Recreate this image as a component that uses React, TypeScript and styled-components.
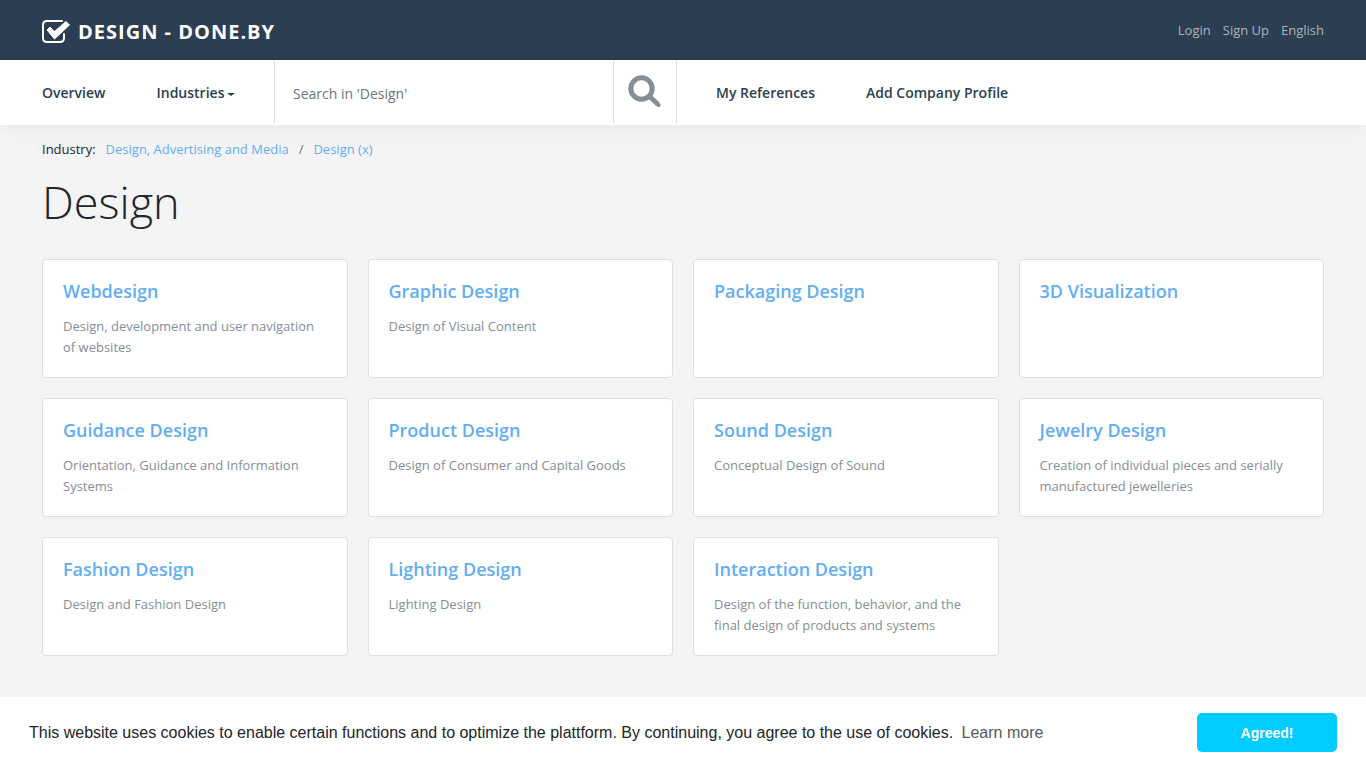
import React from "react";
import styled, { createGlobalStyle } from "styled-components";

const GlobalStyle = createGlobalStyle`
  *, *::before, *::after { box-sizing: border-box; }
  body {
    margin: 0;
    background: #f4f4f4;
    color: #212529;
    font-family: "Open Sans", "Noto Sans", sans-serif;
    font-size: 14px;
    line-height: 21px;
  }
  a { text-decoration: none; }
`;

const TopBar = styled.header`
  display: flex;
  align-items: center;
  justify-content: space-between;
  height: 60px;
  padding: 0 42px;
  background: #2c3e52;
`;

const Brand = styled.a`
  display: flex;
  align-items: center;
  gap: 8px;
  padding-top: 3px;
  color: #fff;
  font-size: 20px;
  line-height: 30px;
  font-weight: 700;
  letter-spacing: 1px;
  text-transform: uppercase;
`;

const AccountLinks = styled.nav`
  display: flex;
  gap: 12px;
`;

const AccountLink = styled.a`
  color: #abb2ba;
  font-size: 13px;
`;

const NavBar = styled.nav`
  display: flex;
  height: 65px;
  padding-left: 42px;
  background: #fff;
  border-bottom: 1px solid #fff;
  box-shadow: 0 2px 20px rgba(0, 0, 0, 0.06);
`;

const NavGroup = styled.div<{ $width?: number }>`
  display: flex;
  align-items: center;
  gap: 51px;
  flex: 0 0 ${(p) => (p.$width ? `${p.$width}px` : "auto")};
`;

const NavLink = styled.a`
  display: flex;
  align-items: center;
  gap: 3px;
  color: #2c3e50;
  font-size: 14px;
  font-weight: 600;
  white-space: nowrap;
`;

const Caret = styled.span`
  margin-top: 4px;
  border: 4px solid transparent;
  border-top: 3px solid currentColor;
  border-bottom: 0;
`;

const SearchForm = styled.form`
  display: flex;
  flex: 0 1 403px;
  margin-right: 39px;
  border: solid #dedfe0;
  border-width: 0 1px;
`;

const SearchInput = styled.input`
  flex: 1;
  min-width: 0;
  padding: 3px 18px 0;
  border: 0;
  outline: 0;
  background: none;
  color: #495057;
  font: inherit;
  font-size: 14px;
  font-weight: 500;
  &::placeholder { color: #6c757d; opacity: 1; }
`;

const SearchButton = styled.button`
  display: flex;
  align-items: center;
  justify-content: center;
  flex: 0 0 63px;
  padding: 0 2px 2px 0;
  border: 0;
  border-left: 1px solid #dedfe0;
  background: none;
  color: #868e96;
`;

const Main = styled.main`
  padding: 14px 42px 112px;
`;

const Breadcrumb = styled.nav`
  display: flex;
  gap: 10px;
  font-size: 13px;
  color: #6c757d;
`;

const BreadcrumbLabel = styled.span`
  color: #212529;
`;

const BlueLink = styled.a`
  color: #62aef2;
`;

const PageTitle = styled.h1`
  margin: 13px 0 29px;
  font-size: 45px;
  line-height: 57px;
  font-weight: 300;
`;

const CardGrid = styled.div`
  display: grid;
  grid-template-columns: repeat(4, minmax(0, 1fr));
  gap: 20px;
`;

const Card = styled.article`
  min-height: 119px;
  padding: 20px 20px 19px;
  background: #fff;
  border: 1px solid #dfdfdf;
  border-radius: 4px;
`;

const CardTitle = styled.h2`
  margin: 0 0 13px;
  font-size: 18px;
  line-height: 23px;
  font-weight: 600;
`;

const CardText = styled.p`
  margin: 0;
  color: #868e96;
  font-size: 13px;
  line-height: 21px;
`;

const CookieBar = styled.aside`
  position: fixed;
  right: 0;
  bottom: 0;
  left: 0;
  display: flex;
  align-items: center;
  justify-content: space-between;
  padding: 16px 29px;
  background: #fff;
  font-family: "Liberation Sans", Arial, sans-serif;
  font-size: 16px;
  line-height: 24px;
`;

const CookieLink = styled.a`
  margin-left: 4px;
  color: #57585b;
`;

const AgreeButton = styled.button`
  flex: 0 0 140px;
  height: 39px;
  border: 0;
  border-radius: 5px;
  background: #00ccff;
  color: #fff;
  font: inherit;
  font-size: 14px;
  font-weight: 700;
`;

const industries = [
  ["Webdesign", "Design, development and user navigation of websites"],
  ["Graphic Design", "Design of Visual Content"],
  ["Packaging Design", ""],
  ["3D Visualization", ""],
  ["Guidance Design", "Orientation, Guidance and Information Systems"],
  ["Product Design", "Design of Consumer and Capital Goods"],
  ["Sound Design", "Conceptual Design of Sound"],
  ["Jewelry Design", "Creation of individual pieces and serially manufactured jewelleries"],
  ["Fashion Design", "Design and Fashion Design"],
  ["Lighting Design", "Lighting Design"],
  ["Interaction Design", "Design of the function, behavior, and the final design of products and systems"],
];

const LogoIcon = () => (
  <svg width="28" height="24" viewBox="0 0 28 24" fill="none" aria-hidden="true">
    <path
      d="M20 1H5Q1 1 1 5v13q0 4 4 4h13q4 0 4-4v-4"
      stroke="#fff"
      strokeWidth="2"
      strokeLinecap="round"
    />
    <path d="M5 10 8 7l4.500 4.500L24 1.500l3.500 3.500L12.500 19z" fill="#fff" stroke="#fff" strokeLinejoin="round" strokeWidth="1" />
  </svg>
);

const SearchIcon = () => (
  <svg width="33" height="33" viewBox="0 0 33 33" fill="none" stroke="currentColor" aria-hidden="true">
    <circle cx="13.500" cy="13.500" r="10.700" strokeWidth="5" />
    <path d="m21 21 8.800 8.300" strokeWidth="5" />
    <path d="m29 28.500 1.500 1.500" strokeWidth="4" strokeLinecap="round" />
  </svg>
);

export default function App() {
  return (
    <>
      <GlobalStyle />
      <TopBar>
        <Brand href="#">
          <LogoIcon />
          Design - done.by
        </Brand>
        <AccountLinks aria-label="Account">
          <AccountLink href="#">Login</AccountLink>
          <AccountLink href="#">Sign Up</AccountLink>
          <AccountLink href="#">English</AccountLink>
        </AccountLinks>
      </TopBar>
      <NavBar aria-label="Main">
        <NavGroup $width={232}>
          <NavLink href="#">Overview</NavLink>
          <NavLink href="#">
            Industries
            <Caret />
          </NavLink>
        </NavGroup>
        <SearchForm role="search">
          <SearchInput type="text" aria-label="Search in Design" placeholder="Search in 'Design'" />
          <SearchButton type="button" aria-label="Search">
            <SearchIcon />
          </SearchButton>
        </SearchForm>
        <NavGroup>
          <NavLink href="#">My References</NavLink>
          <NavLink href="#">Add Company Profile</NavLink>
        </NavGroup>
      </NavBar>
      <Main>
        <Breadcrumb aria-label="Breadcrumb">
          <BreadcrumbLabel>Industry:</BreadcrumbLabel>
          <BlueLink href="#">Design, Advertising and Media</BlueLink>
          <span>/</span>
          <BlueLink href="#">Design (x)</BlueLink>
        </Breadcrumb>
        <PageTitle>Design</PageTitle>
        <CardGrid>
          {industries.map(([title, text]) => (
            <Card key={title}>
              <CardTitle>
                <BlueLink href="#">{title}</BlueLink>
              </CardTitle>
              {text && <CardText>{text}</CardText>}
            </Card>
          ))}
        </CardGrid>
      </Main>
      <CookieBar aria-label="Cookie notice">
        <span>
          This website uses cookies to enable certain functions and to optimize the plattform. By continuing, you agree
          to the use of cookies. <CookieLink href="#">Learn more</CookieLink>
        </span>
        <AgreeButton type="button">Agreed!</AgreeButton>
      </CookieBar>
    </>
  );
}
